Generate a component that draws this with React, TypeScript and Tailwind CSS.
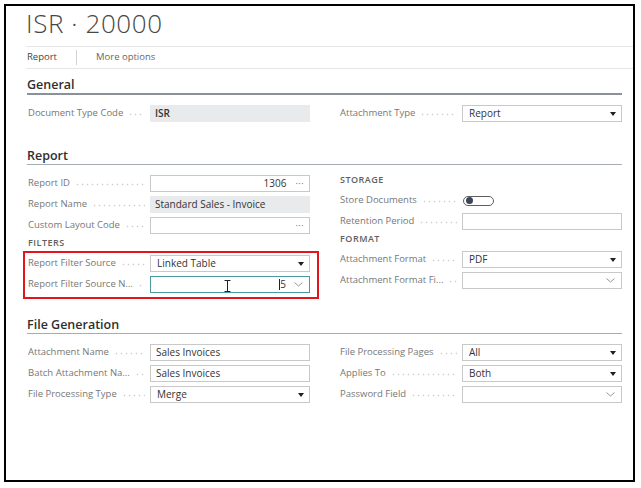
import type { ReactNode } from 'react';

function Triangle() {
  return (
    <svg width="6" height="4" viewBox="0 0 6 4" className="shrink-0">
      <path d="M0 0H6L3 4Z" fill="#1f1f1f" />
    </svg>
  );
}

function Chevron() {
  return (
    <svg width="9" height="5" viewBox="0 0 9 5" className="shrink-0">
      <path d="M0.5 0.5L4.5 4L8.5 0.5" fill="none" stroke="#8a8a8a" strokeWidth="0.9" />
    </svg>
  );
}

function Field({ label, children }: { label: string; children: ReactNode }) {
  return (
    <div className="flex h-[21px] items-center">
      <div className="flex w-[123px] shrink-0 items-center pl-px pr-[5px]">
        <span className="whitespace-nowrap text-[9.5px] text-[#777]">{label}</span>
        {/* leader dots */}
        <span className="ml-[5px] mt-[2px] h-[3px] flex-1 bg-[radial-gradient(circle,#cfcfcf_0.7px,transparent_1.1px)] bg-[length:5px_3px] bg-repeat-x" />
      </div>
      <div className="w-[160px]">{children}</div>
    </div>
  );
}

function TextBox({ value, right, gray, bold }: { value?: string; right?: ReactNode; gray?: boolean; bold?: boolean }) {
  return (
    <div
      className={`flex h-[17px] items-center pl-[5px] pr-[5px] text-[10px] text-[#333] ${
        gray ? 'bg-[#e9eaec]' : 'border border-[#c9c9c9] bg-white'
      }`}
    >
      <span className={`flex-1 whitespace-nowrap ${bold ? 'font-semibold' : ''}`}>{value}</span>
      {right}
    </div>
  );
}

function Select({ value }: { value?: string }) {
  return (
    <div className="flex h-[17px] items-center border border-[#c9c9c9] bg-white pl-[6px] pr-[5px] text-[10px] text-[#333]">
      <span className="flex-1 whitespace-nowrap">{value}</span>
      <Triangle />
    </div>
  );
}

function Lookup() {
  return (
    <div className="flex h-[17px] items-center justify-end border border-[#c9c9c9] bg-white pr-[6px]">
      <Chevron />
    </div>
  );
}

function Group({ title }: { title: string }) {
  return (
    <div className="h-[17px] pl-px text-[9px] font-semibold leading-[13px] tracking-[0.5px] text-[#5f5f5f]">
      {title}
    </div>
  );
}

function Heading({ title, thick }: { title: string; thick?: boolean }) {
  return (
    <div
      className={`box-content h-[16px] text-[12.5px] font-semibold leading-[16px] text-[#2f2f2f] ${
        thick ? 'border-b-2 border-[#8c9098]' : 'border-b border-[#a7abb2]'
      }`}
    >
      {title}
    </div>
  );
}

const More = () => <span className="text-[9px] tracking-[0.5px] text-[#666]">···</span>;

export default function App() {
  return (
    <div className="h-[488px] w-[641px] bg-white p-[4px]" style={{ fontFamily: '"Open Sans", "Noto Sans", sans-serif' }}>
      <div className="flex h-[478px] w-[631px] flex-col border-2 border-black">
        {/* Header */}
        <div className="ml-[20px] border-b border-[#e6e6e6] pb-[9px] pt-[3px]">
          <h1 className="h-[28px] text-[26px] font-light leading-[28px] tracking-[0.6px] text-[#474747]">ISR · 20000</h1>
        </div>
        <div className="ml-[20px] flex h-[22px] items-center border-b border-[#e6e6e6] pl-px text-[9.5px]">
          <span className="text-[#444]">Report</span>
          <span className="ml-[19px] h-[15px] w-px bg-[#d4d4d4]" />
          <span className="ml-[19px] text-[#666]">More options</span>
        </div>

        <div className="pl-[21px] pr-[11px]">
          {/* General */}
          <div className="mt-[8px]">
            <Heading title="General" thick />
            <div className="mt-[8px] grid grid-cols-2 gap-x-[29px]">
              <Field label="Document Type Code">
                <TextBox value="ISR" gray bold />
              </Field>
              <Field label="Attachment Type">
                <Select value="Report" />
              </Field>
            </div>
          </div>

          {/* Report */}
          <div className="mt-[24px]">
            <Heading title="Report" />
            <div className="mt-[8px] grid grid-cols-2 gap-x-[29px]">
              <div className="relative">
                <Field label="Report ID">
                  <TextBox
                    right={
                      <span className="flex items-center gap-[9px]">
                        <span>1306</span>
                        <More />
                      </span>
                    }
                  />
                </Field>
                <Field label="Report Name">
                  <TextBox value="Standard Sales - Invoice" gray />
                </Field>
                <Field label="Custom Layout Code">
                  <TextBox right={<More />} />
                </Field>
                <Group title="FILTERS" />
                <Field label="Report Filter Source">
                  <Select value="Linked Table" />
                </Field>
                <Field label="Report Filter Source N...">
                  <div className="relative flex h-[17px] items-center justify-end border-[1.5px] border-[#4a9aa1] bg-white pr-[6px] text-[10px] text-[#333]">
                    <span className="h-[11px] w-px bg-[#222]" />
                    <span className="mr-[8px]">5</span>
                    <Chevron />
                    {/* mouse cursor */}
                    <svg width="7" height="12" viewBox="0 0 7 12" className="absolute left-[73px] top-[3px]">
                      <path d="M0.5 0.5H6.5M3.5 0.5V11.5M0.5 11.5H6.5" fill="none" stroke="#222" strokeWidth="1" />
                    </svg>
                  </div>
                </Field>
                {/* highlight annotation */}
                <div className="pointer-events-none absolute left-[-4px] top-[78px] h-[48px] w-[296px] border-2 border-[#e3141b]" />
              </div>
              <div>
                <Group title="STORAGE" />
                <Field label="Store Documents">
                  <div className="ml-px flex h-[10px] w-[31px] items-center rounded-full border border-[#5e5e5e] bg-white">
                    <span className="ml-[2px] h-[7px] w-[7px] rounded-full bg-[#3b4658]" />
                  </div>
                </Field>
                <Field label="Retention Period">
                  <TextBox />
                </Field>
                <Group title="FORMAT" />
                <Field label="Attachment Format">
                  <Select value="PDF" />
                </Field>
                <Field label="Attachment Format Fi...">
                  <Lookup />
                </Field>
              </div>
            </div>
          </div>

          {/* File Generation */}
          <div className="mt-[22px]">
            <Heading title="File Generation" />
            <div className="mt-[8px] grid grid-cols-2 gap-x-[29px]">
              <div>
                <Field label="Attachment Name">
                  <TextBox value="Sales Invoices" />
                </Field>
                <Field label="Batch Attachment Na...">
                  <TextBox value="Sales Invoices" />
                </Field>
                <Field label="File Processing Type">
                  <Select value="Merge" />
                </Field>
              </div>
              <div>
                <Field label="File Processing Pages">
                  <Select value="All" />
                </Field>
                <Field label="Applies To">
                  <Select value="Both" />
                </Field>
                <Field label="Password Field">
                  <Lookup />
                </Field>
              </div>
            </div>
          </div>
        </div>
      </div>
    </div>
  );
}
